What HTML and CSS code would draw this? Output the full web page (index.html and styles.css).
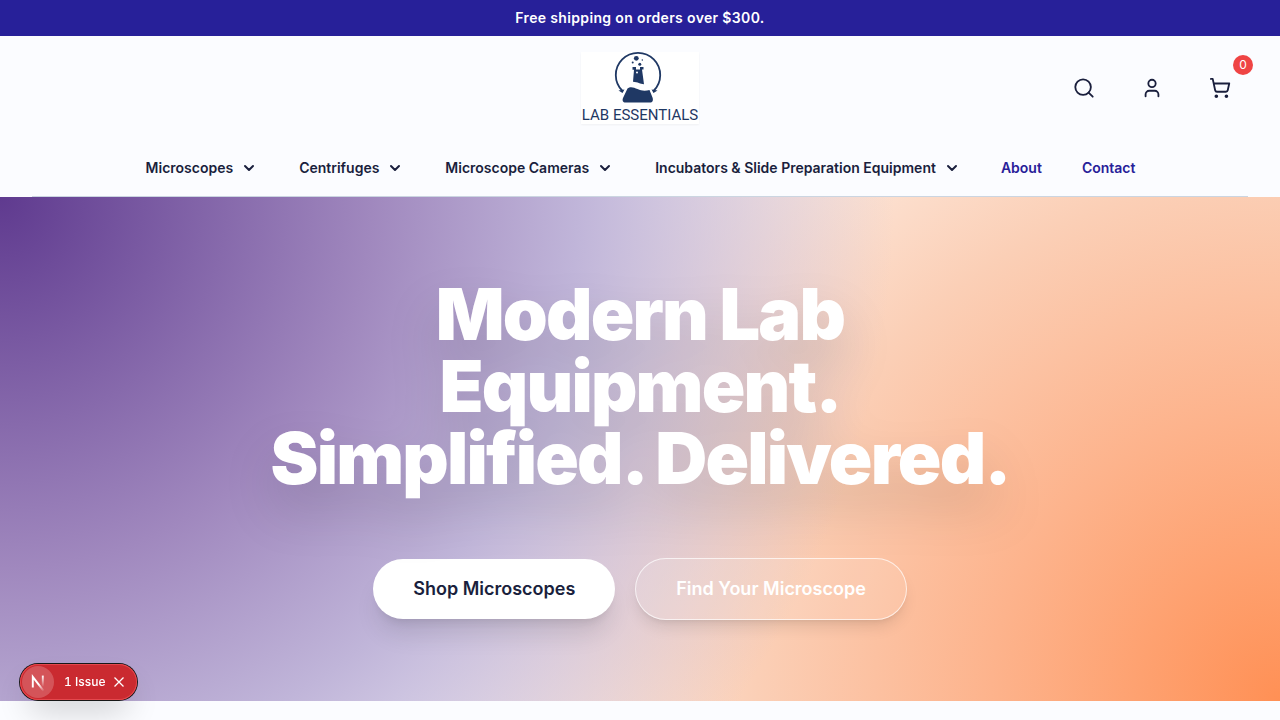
FILE: index.html
```html
<!DOCTYPE html>
<html lang="en">
<head>
<meta charset="utf-8">
<meta name="viewport" content="width=device-width, initial-scale=1">
<title>Lab Essentials</title>
<link rel="stylesheet" href="styles.css">
</head>
<body>
<div class="promo">Free shipping on orders over $300.</div>
<header class="header">
  <div class="header-top">
    <a class="logo" href="#" aria-label="Lab Essentials home">
      <svg viewBox="0 0 118 72" width="118" height="72" fill="#1f3864">
        <rect width="118" height="72" fill="#fff"/>
        <path d="M41.500 39A22.200 22.200 0 1 1 72.500 39" fill="none" stroke="#1f3864" stroke-width="1.800"/>
        <path d="M37.500 38.500l6-1-2 3.500zM76.500 38.500l-6-1 2 3.500z"/>
        <path d="M46.500 36.500c3-2.500 6.500-1 10 .5 4 2 8 2 12 1l3 7.500c1 3 0 5-2.500 5H44.500c-2.500 0-3.500-2-2.500-4.500z"/>
        <path d="M51.500 15h3.500v2.500h4V15h3.500v2.500H61l2 14.700c-4-.2-6-2.200-11-2.500l1-12h-1.500z"/>
        <circle cx="55.300" cy="6.300" r="2.400"/><circle cx="58.800" cy="12.300" r="1.500"/><circle cx="51.700" cy="10.500" r="1"/><circle cx="61.300" cy="8" r=".7"/>
        <circle cx="56" cy="20.500" r="1" fill="#fff"/>
        <text class="logo-text" x="59" y="68" text-anchor="middle">LAB ESSENTIALS</text>
      </svg>
    </a>
    <div class="actions">
      <button class="action" type="button" aria-label="Search"><svg class="icon" viewBox="0 0 24 24"><circle cx="11" cy="11" r="8.500"/><path d="m21.500 21.500-4.500-4.500"/></svg></button>
      <button class="action" type="button" aria-label="Account"><svg class="icon" viewBox="0 0 24 24"><path d="M19 21v-2a4 4 0 0 0-4-4H9a4 4 0 0 0-4 4v2"/><circle cx="12" cy="7" r="4"/></svg></button>
      <button class="action" type="button" aria-label="Cart"><svg class="icon" viewBox="0 0 24 24"><circle cx="8" cy="21" r="1"/><circle cx="19" cy="21" r="1"/><path d="M2.050 2.050h2l2.660 12.420a2 2 0 0 0 2 1.580h9.780a2 2 0 0 0 1.950-1.570l1.650-7.430H5.120"/></svg><span class="badge">0</span></button>
    </div>
  </div>
  <nav class="nav">
    <button class="nav-menu" type="button">Microscopes<svg class="chevron" viewBox="0 0 16 16"><path d="m4 6 4 4 4-4"/></svg></button>
    <button class="nav-menu" type="button">Centrifuges<svg class="chevron" viewBox="0 0 16 16"><path d="m4 6 4 4 4-4"/></svg></button>
    <button class="nav-menu" type="button">Microscope Cameras<svg class="chevron" viewBox="0 0 16 16"><path d="m4 6 4 4 4-4"/></svg></button>
    <button class="nav-menu" type="button">Incubators &amp; Slide Preparation Equipment<svg class="chevron" viewBox="0 0 16 16"><path d="m4 6 4 4 4-4"/></svg></button>
    <a class="nav-link" href="#">About</a>
    <a class="nav-link" href="#">Contact</a>
  </nav>
</header>
<main class="hero">
  <h1 class="title">Modern Lab Equipment.<br>Simplified. Delivered.</h1>
  <div class="cta">
    <a class="btn btn-solid" href="#">Shop Microscopes</a>
    <a class="btn btn-outline" href="#">Find Your Microscope</a>
  </div>
</main>
<div class="issue">
  <span class="issue-mark"><svg viewBox="0 0 40 40" width="32" height="32" fill="none" stroke-width="2.400"><defs><linearGradient id="leg" x1="0" y1="12" x2="0" y2="26" gradientUnits="userSpaceOnUse"><stop stop-color="#fff"/><stop offset="1" stop-color="#fff" stop-opacity="0"/></linearGradient><linearGradient id="diag" x1="22" y1="22" x2="28" y2="31" gradientUnits="userSpaceOnUse"><stop stop-color="#fff"/><stop offset="1" stop-color="#fff" stop-opacity="0"/></linearGradient></defs><path d="M13.500 27V13.500L27 31" stroke="url(#diag)"/><path d="M26 12v14" stroke="url(#leg)"/></svg></span>
  <button class="issue-text" type="button">1 Issue</button>
  <button class="issue-close" type="button" aria-label="Dismiss"><svg viewBox="0 0 14 14" width="14" height="14" fill="none" stroke="#fff" stroke-width="1.300"><path d="m2.500 2.500 9 9M11.500 2.500l-9 9"/></svg></button>
</div>
</body>
</html>
```
FILE: styles.css
```css
* { box-sizing: border-box; }
body {
  margin: 0;
  background: #fbfcff;
  color: #1a1f3d;
  font-family: Inter, "Liberation Sans", sans-serif;
  font-size: 14px;
  line-height: 20px;
  min-height: 100vh;
}
button { font: inherit; color: inherit; background: none; border: 0; padding: 0; cursor: pointer; }
a { color: inherit; text-decoration: none; }
svg { display: block; }
.promo {
  background: #272099;
  color: #fff;
  padding: 8px 16px;
  text-align: center;
  font-weight: 600;
  letter-spacing: 0.025em;
}
.header { padding: 16px 32px 0; }
.header-top {
  display: grid;
  grid-template-columns: 1fr auto 1fr;
  align-items: center;
  height: 72px;
}
.logo { grid-column: 2; box-shadow: 0 1px 2px rgba(0, 0, 0, 0.05); }
.logo-text { font-family: Roboto, "Liberation Sans", sans-serif; font-size: 15px; }
.actions { display: flex; justify-content: flex-end; gap: 12px; }
.action { position: relative; padding: 17px; }
.icon {
  width: 22px;
  height: 22px;
  fill: none;
  stroke: currentColor;
  stroke-width: 2;
  stroke-linecap: round;
  stroke-linejoin: round;
}
.badge {
  position: absolute;
  top: -5px;
  right: -5px;
  width: 20px;
  border-radius: 10px;
  background: #ef4444;
  color: #fff;
  font-size: 12px;
  font-weight: 400;
  text-align: center;
}
.nav {
  display: flex;
  justify-content: center;
  align-items: center;
  gap: 40px;
  margin-top: 16px;
  padding: 18px 0;
  border-bottom: 1px solid #cbd5e1;
  font-weight: 600;
}
.nav-menu { display: flex; align-items: center; gap: 8px; padding: 0 1px; }
.nav-link { color: #272099; }
.chevron {
  width: 16px;
  height: 16px;
  fill: none;
  stroke: currentColor;
  stroke-width: 2;
  stroke-linecap: round;
  stroke-linejoin: round;
}
.hero {
  display: flex;
  flex-direction: column;
  align-items: center;
  gap: 64px;
  padding: 81px 32px;
  background:
    radial-gradient(circle at top left, #5f3a8f 0%, #a088be 27%, #c0b5d9 42%, rgba(240, 225, 225, 0) 65%),
    radial-gradient(circle at bottom right, #ff9055 0%, #fdb38c 21%, #fbcfb6 38%, rgba(255, 255, 255, 0) 64%),
    #fff;
}
.title {
  max-width: 768px;
  margin: 0;
  color: #fff;
  font-size: 72px;
  font-weight: 900;
  line-height: 72px;
  letter-spacing: -0.025em;
  text-align: center;
  filter: drop-shadow(0 25px 25px rgba(0, 0, 0, 0.15));
}
.cta { display: flex; flex-wrap: wrap; justify-content: center; align-items: center; gap: 20px; }
.btn {
  padding: 16px 40px;
  border-radius: 31px;
  font-size: 18px;
  font-weight: 600;
  line-height: 28px;
  box-shadow: 0 10px 15px -3px rgba(0, 0, 0, 0.1), 0 4px 6px -4px rgba(0, 0, 0, 0.1);
}
.btn-solid { background: #fff; box-shadow: 0 20px 25px -5px rgba(0, 0, 0, 0.1), 0 8px 10px -6px rgba(0, 0, 0, 0.1); }
.btn-outline { border: 1px solid rgba(255, 255, 255, 0.7); background: rgba(255, 255, 255, 0.1); color: #fff; }
.issue {
  position: fixed;
  left: 20px;
  bottom: 20px;
  display: flex;
  align-items: center;
  height: 36px;
  padding: 0 11px 0 2px;
  border-radius: 18px;
  background: #ca2a30;
  color: #fff;
  font-size: 12px;
  font-weight: 500;
  box-shadow: 0 0 0 1px #171717, inset 0 0 0 1px #e5484d, 0 16px 32px -8px rgba(0, 0, 0, 0.24);
}
.issue-mark { border-radius: 50%; background: rgba(255, 255, 255, 0.2); }
.issue-text { margin: 0 7px 0 10px; font-variant-numeric: tabular-nums; }
```
